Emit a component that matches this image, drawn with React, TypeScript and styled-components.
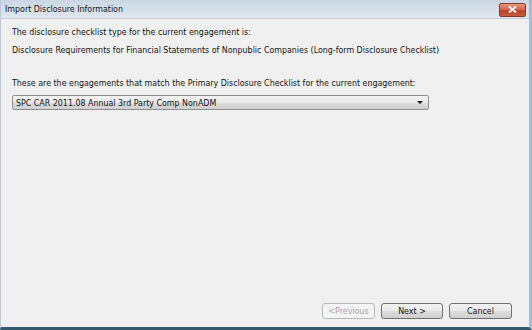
import React from 'react';
import styled, { createGlobalStyle } from 'styled-components';

const GlobalStyle = createGlobalStyle`
  html, body {
    margin: 0;
    padding: 0;
    background: #f0f0f0;
  }
`;

const Window = styled.div`
  box-sizing: border-box;
  width: 532px;
  height: 330px;
  display: flex;
  flex-direction: column;
  background: #f0f0f0;
  border-left: 1px solid #b9c9d8;
  border-right: 3px solid #a9bccd;
  border-bottom: 3px solid #35596a;
  font-family: 'DejaVu Sans Condensed', 'DejaVu Sans', sans-serif;
  font-size: 8.8px;
  color: #111;
  overflow: hidden;
`;

const TitleBar = styled.div`
  height: 18px;
  flex: 0 0 18px;
  display: flex;
  align-items: center;
  justify-content: space-between;
  padding: 0 3px 0 4px;
  background: linear-gradient(to bottom, #c9d6e3 0%, #d8e1ea 60%, #dfe6ed 100%);
  border-bottom: 1px solid #c6cfd8;
`;

const Title = styled.span`
  font-size: 8.8px;
  color: #111;
`;

const CloseButton = styled.div`
  width: 25px;
  height: 12px;
  margin-top: 1px;
  border: 1px solid #8a3a2a;
  border-radius: 2px;
  background: linear-gradient(to bottom, #e49b83 0%, #d2654a 45%, #b8442c 55%, #c85a3c 100%);
  display: flex;
  align-items: center;
  justify-content: center;
`;

const Body = styled.div`
  flex: 1;
  display: flex;
  flex-direction: column;
  padding: 0 0 0 11px;
`;

const Line = styled.p<{ $top: number }>`
  margin: ${(p) => p.$top}px 0 0;
  height: 12px;
  line-height: 12px;
  white-space: nowrap;
`;

const Select = styled.div`
  box-sizing: border-box;
  margin-top: 6px;
  width: 417px;
  height: 15px;
  display: flex;
  align-items: center;
  justify-content: space-between;
  padding: 0 5px 0 3px;
  border: 1px solid #8e8f8f;
  border-radius: 2px;
  background: linear-gradient(to bottom, #f3f3f3 0%, #ebebeb 50%, #dddddd 51%, #cfcfcf 100%);
  white-space: nowrap;
`;

const Arrow = styled.span`
  width: 0;
  height: 0;
  border-left: 3px solid transparent;
  border-right: 3px solid transparent;
  border-top: 3px solid #111;
`;

const Footer = styled.div`
  display: flex;
  justify-content: flex-end;
  gap: 6px;
  padding: 0 17px 8px 0;
`;

const Button = styled.button<{ $width: number }>`
  box-sizing: border-box;
  width: ${(p) => p.$width}px;
  height: 16px;
  padding: 0;
  font-family: inherit;
  font-size: 8.8px;
  color: #111;
  border: 1px solid #707070;
  border-radius: 3px;
  background: linear-gradient(to bottom, #f2f2f2 0%, #ebebeb 50%, #dddddd 51%, #cfcfcf 100%);

  &:disabled {
    color: #a3a3a3;
    border-color: #b5b9bc;
    background: #f4f4f4;
  }
`;

export default function App() {
  return (
    <>
      <GlobalStyle />
      <Window>
        <TitleBar>
          <Title>Import Disclosure Information</Title>
          <CloseButton>
            <svg width="9" height="7" viewBox="0 0 9 7">
              <path d="M1 0.5 L8 6.5 M8 0.5 L1 6.5" stroke="#fff" strokeWidth="1.8" />
            </svg>
          </CloseButton>
        </TitleBar>
        <Body>
          <Line $top={7}>The disclosure checklist type for the current engagement is:</Line>
          <Line $top={6}>
            Disclosure Requirements for Financial Statements of Nonpublic Companies (Long-form Disclosure Checklist)
          </Line>
          <Line $top={21}>
            These are the engagements that match the Primary Disclosure Checklist for the current engagement:
          </Line>
          <Select>
            <span>SPC CAR 2011.08 Annual 3rd Party Comp NonADM</span>
            <Arrow />
          </Select>
        </Body>
        <Footer>
          <Button $width={53} disabled>
            &lt;Previous
          </Button>
          <Button $width={62}>Next &gt;</Button>
          <Button $width={63}>Cancel</Button>
        </Footer>
      </Window>
    </>
  );
}
